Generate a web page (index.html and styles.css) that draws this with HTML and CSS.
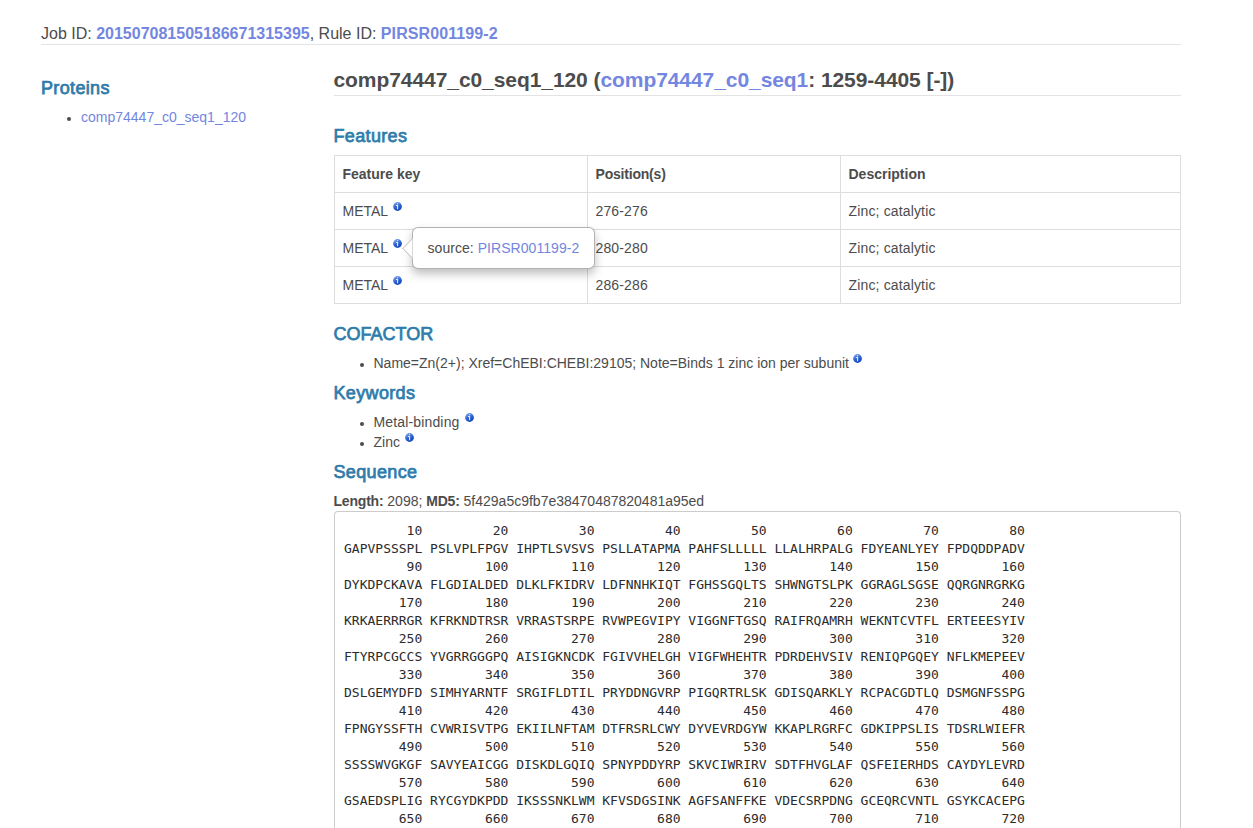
FILE: index.html
```
<!DOCTYPE html>
<html lang="en">
<head>
<meta charset="utf-8">
<title>Job result</title>
<link rel="stylesheet" href="styles.css">
</head>
<body>
<svg class="defs" aria-hidden="true">
  <defs>
    <linearGradient id="ball" x1="0.2" y1="0" x2="0.7" y2="1">
      <stop offset="0" stop-color="#86a9ee"/>
      <stop offset="0.5" stop-color="#2f66d6"/>
      <stop offset="1" stop-color="#0d3fb4"/>
    </linearGradient>
    <symbol id="info" viewBox="0 0 9 9">
      <circle cx="4.5" cy="4.5" r="4.4" fill="url(#ball)"/>
      <path d="M3 3.5H4.6V7.2M4 1.7H5.2" fill="none" stroke="#dfe9ff" stroke-width="1.1"/>
    </symbol>
  </defs>
</svg>
<div class="container">
  <div class="job">Job ID: <a href="#"><b>201507081505186671315395</b></a>, Rule ID: <a href="#"><b class="rule">PIRSR001199-2</b></a></div>
  <div class="row">
    <aside class="side">
      <h4>Proteins</h4>
      <ul><li><a href="#">comp74447_c0_seq1_120</a></li></ul>
    </aside>
    <main class="main">
      <h3>comp74447_c0_seq1_120 (<a href="#">comp74447_c0_seq1</a>: 1259-4405 [-])</h3>
      <h4>Features</h4>
      <table>
        <colgroup><col class="c1"><col class="c2"><col></colgroup>
        <tr><th>Feature key</th><th class="tight">Position(s)</th><th>Description</th></tr>
        <tr><td>METAL <svg class="info"><use href="#info"/></svg></td><td class="wide">276-276</td><td class="wide">Zinc; catalytic</td></tr>
        <tr><td><div class="anchor">METAL <svg class="info"><use href="#info"/></svg><div class="popover">source: <a href="#">PIRSR001199-2</a></div></div></td><td class="wide">280-280</td><td class="wide">Zinc; catalytic</td></tr>
        <tr><td>METAL <svg class="info"><use href="#info"/></svg></td><td class="wide">286-286</td><td class="wide">Zinc; catalytic</td></tr>
      </table>
      <h4 class="caps">COFACTOR</h4>
      <ul><li>Name=Zn(2+); Xref=ChEBI:CHEBI:29105; Note=Binds 1 zinc ion per subunit <svg class="info note"><use href="#info"/></svg></li></ul>
      <h4>Keywords</h4>
      <ul>
        <li class="wide">Metal-binding <svg class="info"><use href="#info"/></svg></li>
        <li>Zinc <svg class="info"><use href="#info"/></svg></li>
      </ul>
      <h4>Sequence</h4>
      <div><b class="tight">Length:</b> 2098; <b class="tight">MD5:</b> 5f429a5c9fb7e38470487820481a95ed</div>
<pre>
        10         20         30         40         50         60         70         80
GAPVPSSSPL PSLVPLFPGV IHPTLSVSVS PSLLATAPMA PAHFSLLLLL LLALHRPALG FDYEANLYEY FPDQDDPADV
        90        100        110        120        130        140        150        160
DYKDPCKAVA FLGDIALDED DLKLFKIDRV LDFNNHKIQT FGHSSGQLTS SHWNGTSLPK GGRAGLSGSE QQRGNRGRKG
       170        180        190        200        210        220        230        240
KRKAERRRGR KFRKNDTRSR VRRASTSRPE RVWPEGVIPY VIGGNFTGSQ RAIFRQAMRH WEKNTCVTFL ERTEEESYIV
       250        260        270        280        290        300        310        320
FTYRPCGCCS YVGRRGGGPQ AISIGKNCDK FGIVVHELGH VIGFWHEHTR PDRDEHVSIV RENIQPGQEY NFLKMEPEEV
       330        340        350        360        370        380        390        400
DSLGEMYDFD SIMHYARNTF SRGIFLDTIL PRYDDNGVRP PIGQRTRLSK GDISQARKLY RCPACGDTLQ DSMGNFSSPG
       410        420        430        440        450        460        470        480
FPNGYSSFTH CVWRISVTPG EKIILNFTAM DTFRSRLCWY DYVEVRDGYW KKAPLRGRFC GDKIPPSLIS TDSRLWIEFR
       490        500        510        520        530        540        550        560
SSSSWVGKGF SAVYEAICGG DISKDLGQIQ SPNYPDDYRP SKVCIWRIRV SDTFHVGLAF QSFEIERHDS CAYDYLEVRD
       570        580        590        600        610        620        630        640
GSAEDSPLIG RYCGYDKPDD IKSSSNKLWM KFVSDGSINK AGFSANFFKE VDECSRPDNG GCEQRCVNTL GSYKCACEPG
       650        660        670        680        690        700        710        720
</pre>
    </main>
  </div>
</div>
</body>
</html>
```
FILE: styles.css
```
* { box-sizing: border-box; }
body {
  margin: 0;
  background: #fff;
  color: #4c4c4c;
  font: 14px/20px "Liberation Sans", Arial, sans-serif;
}
a { color: #7386e0; text-decoration: none; }
.defs { position: absolute; width: 0; height: 0; }
.container { width: 1140px; margin-left: 41px; }
.job {
  height: 45px;
  padding-top: 24px;
  border-bottom: 1px solid #e3e3e3;
  font-size: 16px;
  white-space: nowrap;
}
.rule { letter-spacing: 0.1px; }
.row { display: grid; grid-template-columns: 292.5px 847.5px; }
.side { padding-top: 33px; }
.main { padding-top: 20px; }
h4 {
  margin: 0 0 9px;
  color: #2f7cab;
  font-size: 18px;
  font-weight: 400;
  line-height: 20px;
  letter-spacing: 0.35px;
  -webkit-text-stroke: 0.75px #2f7cab;
}
h4.caps { letter-spacing: 0; }
h3 {
  height: 31px;
  margin: 0 0 30px;
  padding-top: 3px;
  border-bottom: 1px solid #e3e3e3;
  font-size: 21px;
  line-height: 24px;
  letter-spacing: -0.07px;
  white-space: nowrap;
}
ul { margin: 0 0 10px; padding-left: 40px; }
li::marker { font-size: 12px; }
table {
  width: 847.5px;
  margin-bottom: 20px;
  border-collapse: collapse;
  table-layout: fixed;
}
.c1, .c2 { width: 253px; }
th, td { height: 37px; padding: 8px; border: 1px solid #ddd; text-align: left; }
.wide { letter-spacing: 0.15px; }
.tight { letter-spacing: -0.2px; }
.info {
  display: inline-block;
  width: 9px;
  height: 9px;
  margin: -6px 0 -1px 1px;
  vertical-align: 6px;
}
.info.note { margin-left: 0; }
.anchor { position: relative; height: 20px; }
.popover {
  position: absolute;
  top: -11px;
  left: 69px;
  width: 183px;
  height: 42px;
  padding: 10px 15px;
  background: #fff;
  border: 1px solid rgba(0, 0, 0, 0.3);
  border-radius: 6px;
  box-shadow: 0 5px 10px rgba(0, 0, 0, 0.25);
  letter-spacing: 0.05px;
  white-space: nowrap;
}
.popover::before {
  content: "";
  position: absolute;
  left: -8px;
  top: 13px;
  width: 14px;
  height: 14px;
  background: #fff;
  border: solid #bbb;
  border-width: 0 0 1px 1px;
  transform: rotate(45deg);
  clip-path: polygon(0 0, 100% 100%, 0 100%);
}
pre {
  height: 317px;
  margin: 0;
  padding: 9.5px;
  overflow: hidden;
  border: 1px solid #ccc;
  border-bottom: 0;
  border-radius: 4px 4px 0 0;
  color: #2b2b2b;
  font: 13px/18px "DejaVu Sans Mono", monospace;
}
```
